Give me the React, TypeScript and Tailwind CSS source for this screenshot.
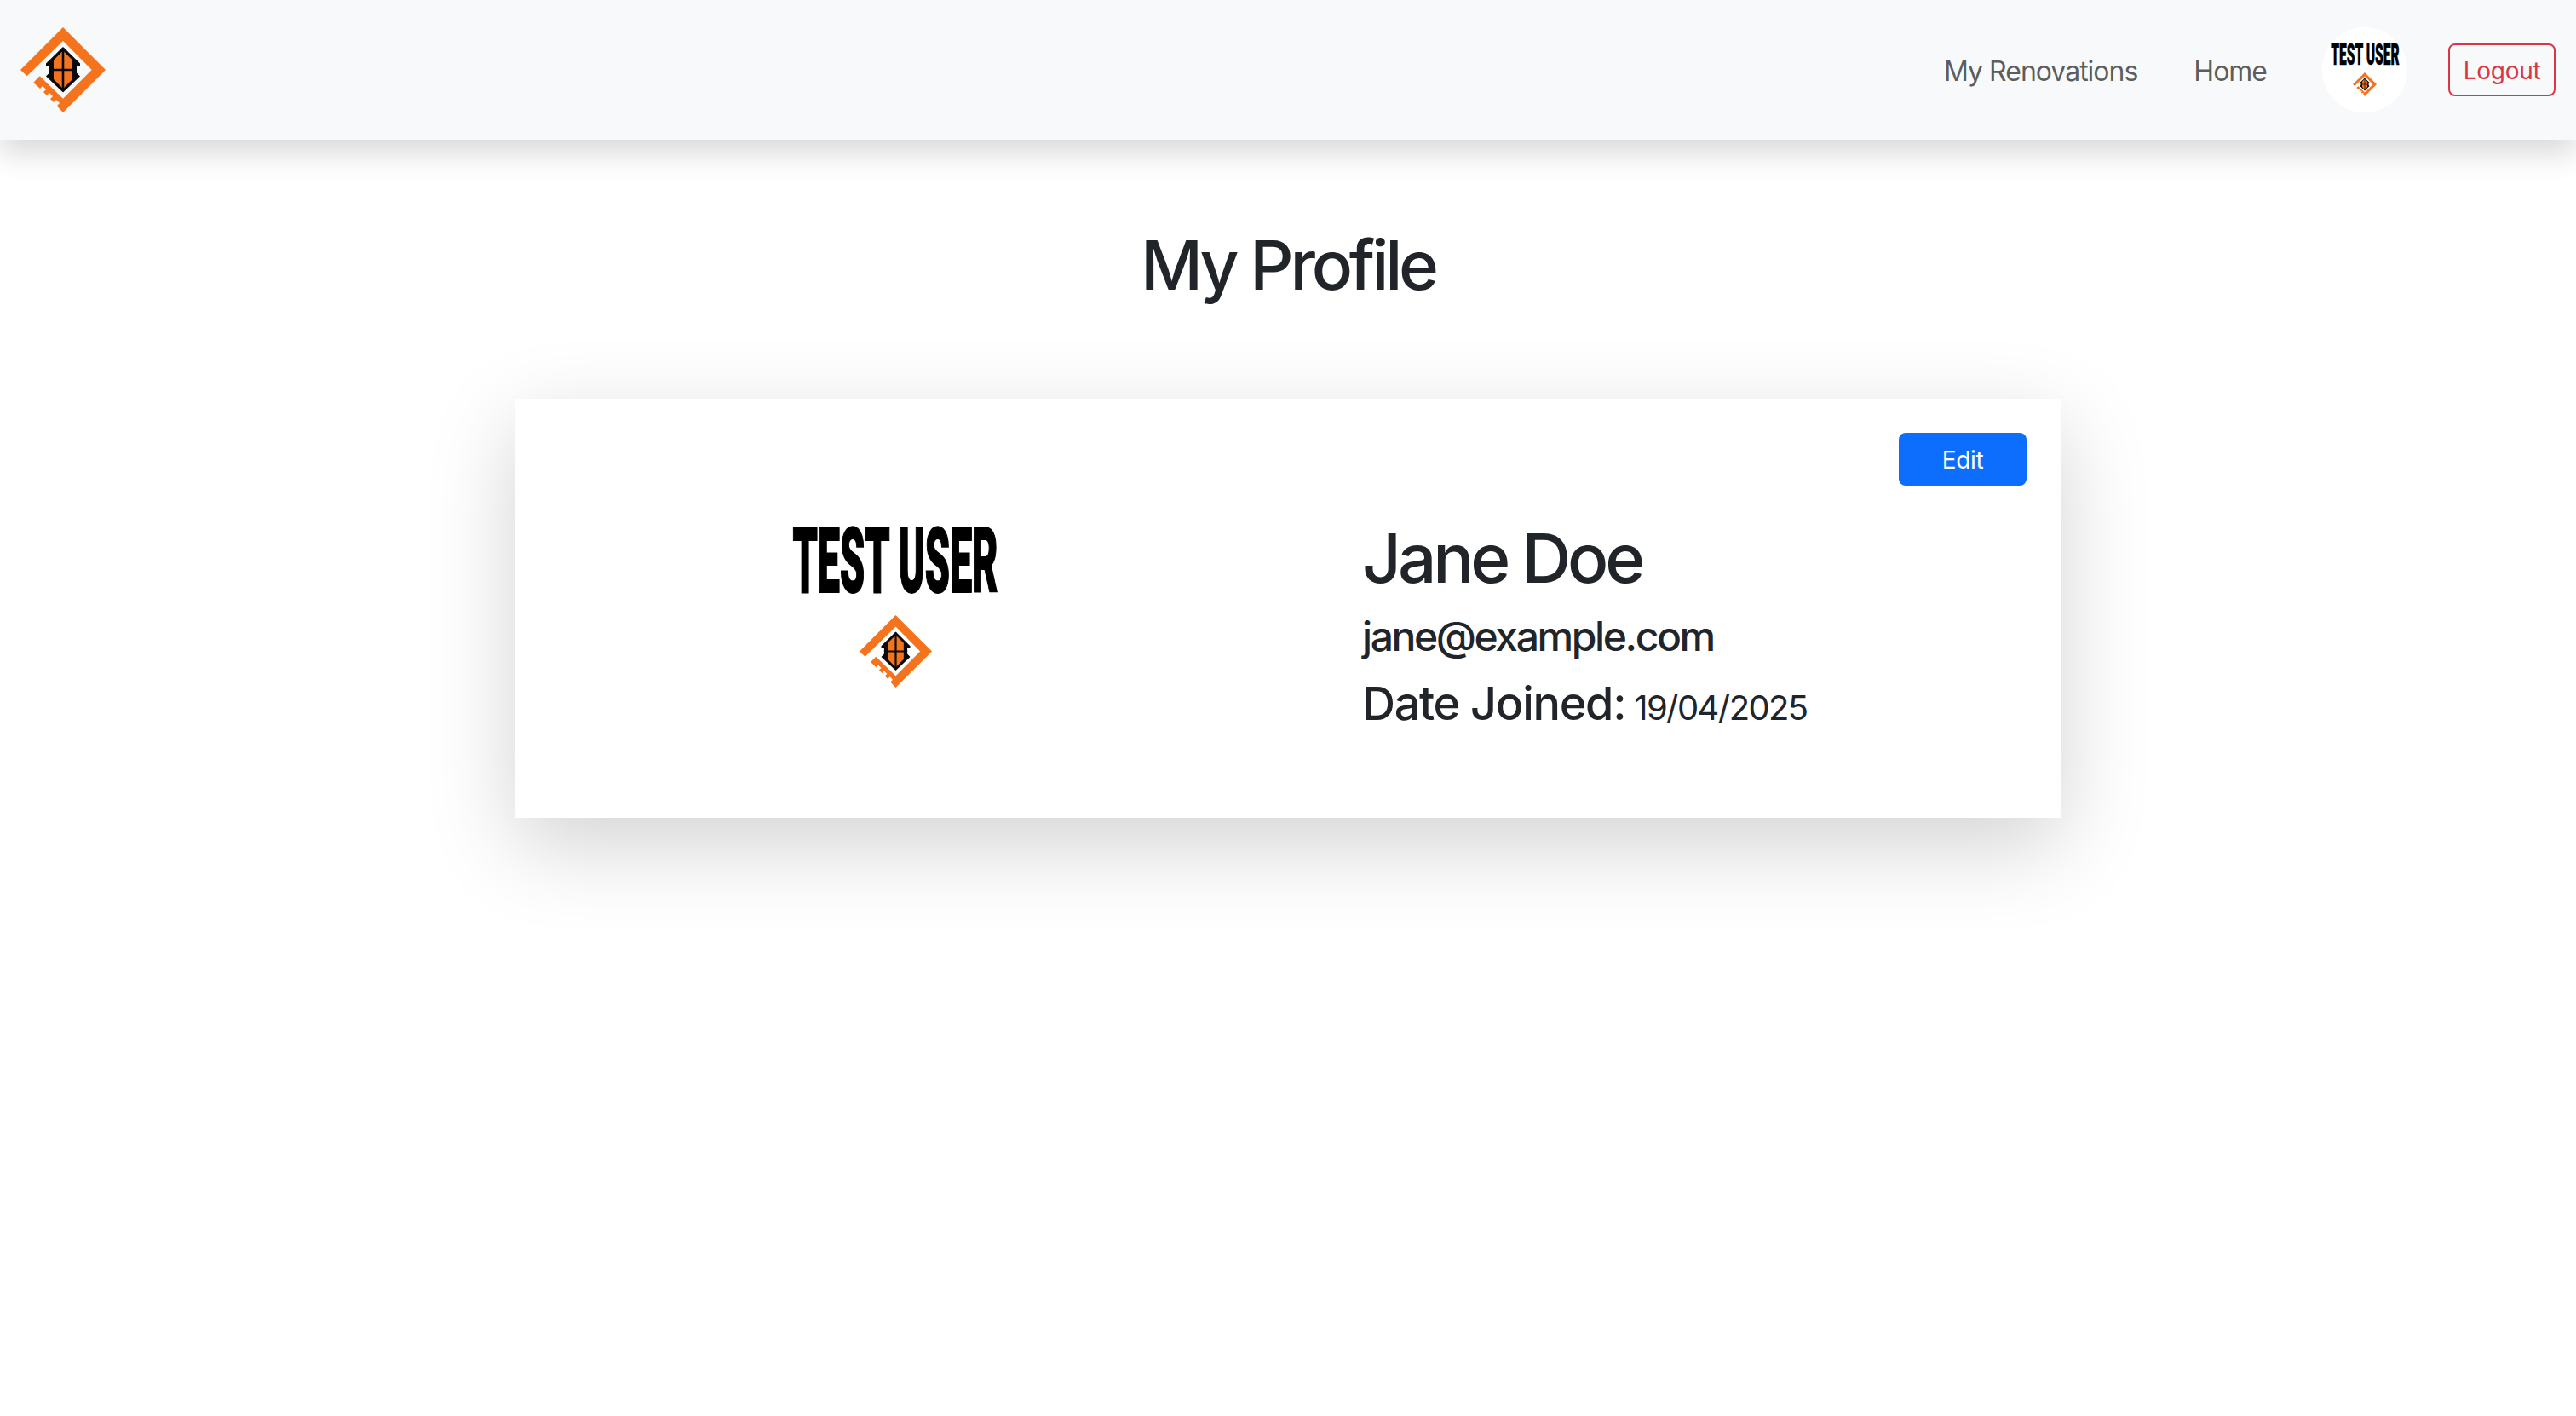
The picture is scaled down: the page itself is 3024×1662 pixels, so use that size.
import React from "react";

function Logo({ size }: { size: number }) {
  return (
    <svg width={size} height={size} viewBox="0 0 100 100" className="block shrink-0">
      <path
        fill="#f5731c"
        d="M50 0L100 50L50 100L42.7 92.3L46 89L42 85L39 88L35 84L38 81L34 77L31 80L27 76L30 73L26 69L23 72L15.3 64.7L22.7 57.3L50 83.7L83.7 50L50 16L7.7 57.3L0 50Z"
      />
      <path
        fill="#0a0a0a"
        d="M50 23L70 42.5L70 45.5L66 45.5L66 53.5L70 57.5L50 76.5L30 57.5L34 53.5L34 45.5L30 45.5L30 42.5Z"
      />
      <path fill="#f5731c" d="M50 27.5L61 38.5L61 61L50 72L39 61L39 38.5Z" />
      <path stroke="#0a0a0a" strokeWidth="2.6" fill="none" d="M50 24V74M34 50H66" />
    </svg>
  );
}

function Avatar({ textClass, size, boxClass, gapClass }: { textClass: string; size: number; boxClass: string; gapClass: string }) {
  return (
    <div className={`flex flex-col items-center ${gapClass}`}>
      <div className={`flex items-center justify-center ${boxClass}`}>
        <span
          className={`inline-block shrink-0 whitespace-nowrap font-black leading-none text-black font-['Roboto','Liberation_Sans',sans-serif] ${textClass}`}
        >
          TEST USER
        </span>
      </div>
      <Logo size={size} />
    </div>
  );
}

export default function App() {
  return (
    <div className="min-h-[1662px] bg-white font-['Inter','Liberation_Sans',sans-serif] text-[#212529]">
      <nav className="flex h-[164px] items-center justify-between bg-[#f8f9fa] px-[24px] shadow-[0_16px_32px_rgba(0,0,0,0.15)]">
        <Logo size={100} />
        <div className="flex items-center">
          <a className="pt-[3px] text-[32px] leading-[48px] tracking-[-1px] text-[#000000a6]">My Renovations</a>
          <a className="ml-[66px] pt-[3px] text-[32px] leading-[48px] tracking-[-1px] text-[#000000a6]">Home</a>
          <div className="ml-[65px] flex h-[100px] w-[100px] items-center justify-center rounded-full bg-white">
            <Avatar
              textClass="text-[35px] scale-x-[0.445] [-webkit-text-stroke:0.6px_black]"
              size={28}
              boxClass="h-[26px] w-[80px]"
              gapClass="gap-[8px]"
            />
          </div>
          <button className="ml-[48px] h-[62px] w-[126px] rounded-[8px] border-2 border-[#dc3545] pt-[2px] text-[28px] tracking-[-0.3px] text-[#dc3545]">
            Logout
          </button>
        </div>
      </nav>

      <main className="flex flex-col items-center">
        <h1 className="mt-[99px] text-[80px] font-medium leading-[96px] tracking-[-4.2px]">My Profile</h1>
        <section className="relative mt-[109px] flex h-[492px] w-[1814px] items-center bg-white shadow-[0_32px_96px_rgba(0,0,0,0.175)]">
          <button className="absolute right-[40px] top-[40px] h-[62px] w-[150px] rounded-[8px] bg-[#0d6efd] pt-[2px] text-[28px] tracking-[-0.3px] text-white">
            Edit
          </button>
          <div className="flex w-[892px] shrink-0 justify-center">
            <Avatar
              textClass="text-[106px] scale-x-[0.44] [-webkit-text-stroke:2px_black]"
              size={85}
              boxClass="h-[76px] w-[238px]"
              gapClass="gap-[25px]"
            />
          </div>
          <div className="ml-[102px] flex flex-col pt-[43px]">
            <h2 className="text-[80px] font-medium leading-[96px] tracking-[-4.1px]">Jane Doe</h2>
            <p className="mt-[15px] text-[48px] font-medium leading-[58px] tracking-[-2.4px]">jane@example.com</p>
            <p className="mt-[16px] text-[54px] font-medium leading-[68px] tracking-[-1.3px]">
              Date Joined:
              <span className="ml-[10px] text-[40px] font-normal tracking-[-1.6px]">19/04/2025</span>
            </p>
          </div>
        </section>
      </main>
    </div>
  );
}
